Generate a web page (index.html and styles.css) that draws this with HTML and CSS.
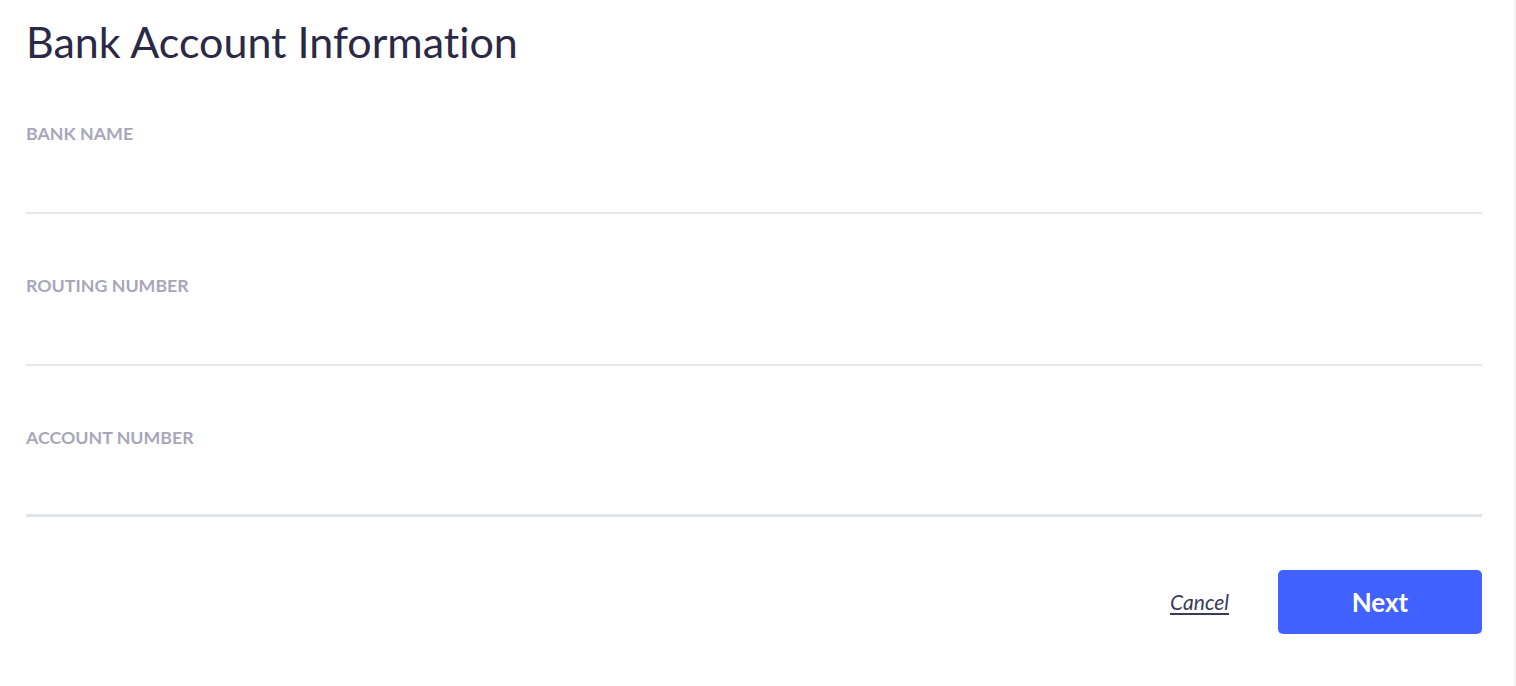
FILE: index.html
```html
<!DOCTYPE html>
<html lang="en">
<head>
<meta charset="utf-8">
<title>Bank Account Information</title>
<link rel="stylesheet" href="styles.css">
</head>
<body>
<div class="page">
  <h1 class="title">Bank Account Information</h1>
  <form class="form">
    <div class="fields">
      <div class="field">
        <label class="label" for="bank">BANK NAME</label>
        <input class="input" id="bank" type="text">
      </div>
      <div class="field">
        <label class="label" for="routing">ROUTING NUMBER</label>
        <input class="input" id="routing" type="text">
      </div>
      <div class="field field-active">
        <label class="label" for="account">ACCOUNT NUMBER</label>
        <input class="input" id="account" type="text">
      </div>
    </div>
    <div class="actions">
      <a class="cancel" href="#">Cancel</a>
      <button class="next" type="button">Next</button>
    </div>
  </form>
</div>
</body>
</html>
```

FILE: styles.css
```css
html, body {
  margin: 0;
  padding: 0;
  background: #ffffff;
}

body {
  font-family: Lato, "Noto Sans", sans-serif;
  font-variant-ligatures: none;
}

.page {
  width: 1516px;
  height: 686px;
  box-sizing: border-box;
  padding: 16px 32px 0 26px;
  border-right: 2px solid #f4f4f7;
}

.title {
  margin: 0 0 54px;
  font-size: 43px;
  font-weight: 400;
  line-height: 1.2;
  color: #2b2946;
}

.fields {
  display: flex;
  flex-direction: column;
  gap: 60px;
}

.field {
  display: flex;
  flex-direction: column;
}

.label {
  display: block;
  height: 21px;
  padding-top: 1px;
  font-size: 17.8px;
  font-weight: 700;
  line-height: 1.2;
  color: #a8a7ba;
}

.input {
  display: block;
  width: 100%;
  height: 70px;
  box-sizing: border-box;
  border: none;
  border-bottom: 2px solid #e6e6ec;
  background: transparent;
  outline: none;
  padding: 0;
  margin: 0;
  font-family: inherit;
  font-size: 20px;
  color: #2b2946;
}

.field-active .input {
  height: 69px;
  border-bottom: 3px solid #e3e3ea;
}

.actions {
  display: flex;
  justify-content: flex-end;
  align-items: center;
  gap: 49px;
  margin-top: 53px;
}

.cancel {
  font-size: 21px;
  font-style: italic;
  color: #3b3a5a;
  text-decoration: underline;
  text-underline-offset: 3px;
  text-decoration-thickness: 2px;
}

.next {
  width: 204px;
  height: 64px;
  border: none;
  border-radius: 5px;
  background: #4262ff;
  color: #ffffff;
  font-family: inherit;
  font-size: 26px;
  font-weight: 700;
  cursor: pointer;
}
```
